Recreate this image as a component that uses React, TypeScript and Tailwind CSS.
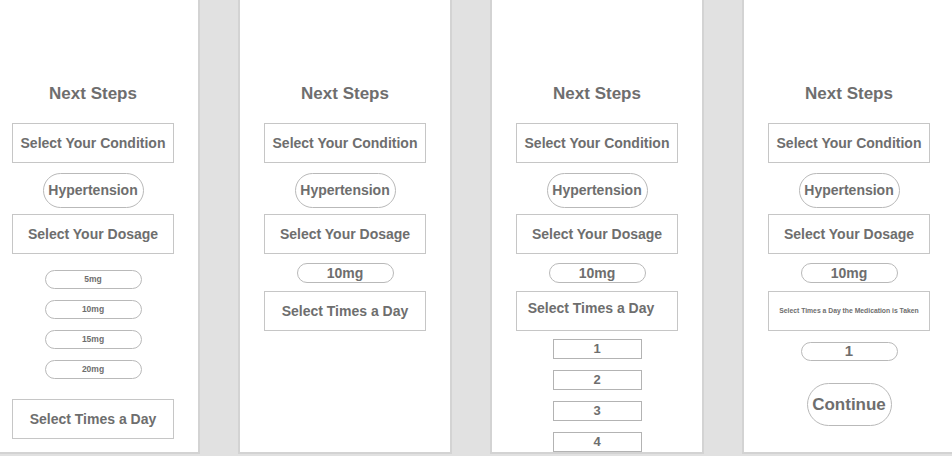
import React from "react";

const font = { fontFamily: '"Liberation Sans", Arial, sans-serif' };

function Box({
  children,
  className = "",
  size = "text-[14px]",
}: {
  children: React.ReactNode;
  className?: string;
  size?: string;
}) {
  return (
    <div
      className={`w-[162px] h-[40px] border border-[#c6c6c6] flex items-center justify-center font-bold text-[#6e6e6e] whitespace-nowrap ${size} ${className}`}
    >
      {children}
    </div>
  );
}

function Pill({ children, className = "" }: { children: React.ReactNode; className?: string }) {
  return (
    <div
      className={`rounded-full border border-[#b9b9b9] flex items-center justify-center font-bold text-[#6e6e6e] ${className}`}
    >
      {children}
    </div>
  );
}

function Panel({ children }: { children: React.ReactNode }) {
  return (
    <div className="w-[214px] h-[454px] shrink-0 bg-white border-x-2 border-b-2 border-[#d3d3d3] flex flex-col items-center pt-[84px]">
      {/* Common header */}
      <h2 className="text-[17px] leading-[20px] font-bold text-[#6e6e6e]">Next Steps</h2>
      <Box className="mt-[19px]">Select Your Condition</Box>
      <Pill className="mt-[10px] w-[101px] h-[35px] text-[14px]">Hypertension</Pill>
      <Box className="mt-[6px]">Select Your Dosage</Box>
      {children}
    </div>
  );
}

export default function App() {
  return (
    <div className="w-[952px] h-[456px] bg-[#e1e1e1] overflow-hidden" style={font}>
      <div className="flex gap-[38px] ml-[-14px]">
        {/* Step 1: pick dosage */}
        <Panel>
          <div className="flex flex-col items-center gap-[11px] mt-[16px]">
            {["5mg", "10mg", "15mg", "20mg"].map((d) => (
              <Pill key={d} className="w-[97px] h-[19px] text-[8.5px]">
                {d}
              </Pill>
            ))}
          </div>
          <Box className="mt-[20px]">Select Times a Day</Box>
        </Panel>

        {/* Step 2: dosage chosen */}
        <Panel>
          <Pill className="mt-[9px] w-[97px] h-[20px] text-[14px]">10mg</Pill>
          <Box className="mt-[8px]">Select Times a Day</Box>
        </Panel>

        {/* Step 3: pick times */}
        <Panel>
          <Pill className="mt-[9px] w-[97px] h-[20px] text-[14px]">10mg</Pill>
          <Box className="mt-[8px] pb-[5px] pr-[12px]">Select Times a Day</Box>
          <div className="flex flex-col items-center gap-[11px] mt-[8px]">
            {[1, 2, 3, 4].map((n) => (
              <div
                key={n}
                className="w-[89px] h-[20px] border border-[#b3b3b3] flex items-center justify-center text-[13px] font-bold text-[#6e6e6e]"
              >
                {n}
              </div>
            ))}
          </div>
        </Panel>

        {/* Step 4: continue */}
        <Panel>
          <Pill className="mt-[9px] w-[97px] h-[20px] text-[14px]">10mg</Pill>
          <Box className="mt-[8px]" size="text-[6.8px]">
            Select Times a Day the Medication is Taken
          </Box>
          <Pill className="mt-[11px] w-[97px] h-[19px] text-[15px]">1</Pill>
          <Pill className="mt-[22px] w-[85px] h-[43px] text-[17px]">Continue</Pill>
        </Panel>
      </div>
    </div>
  );
}
